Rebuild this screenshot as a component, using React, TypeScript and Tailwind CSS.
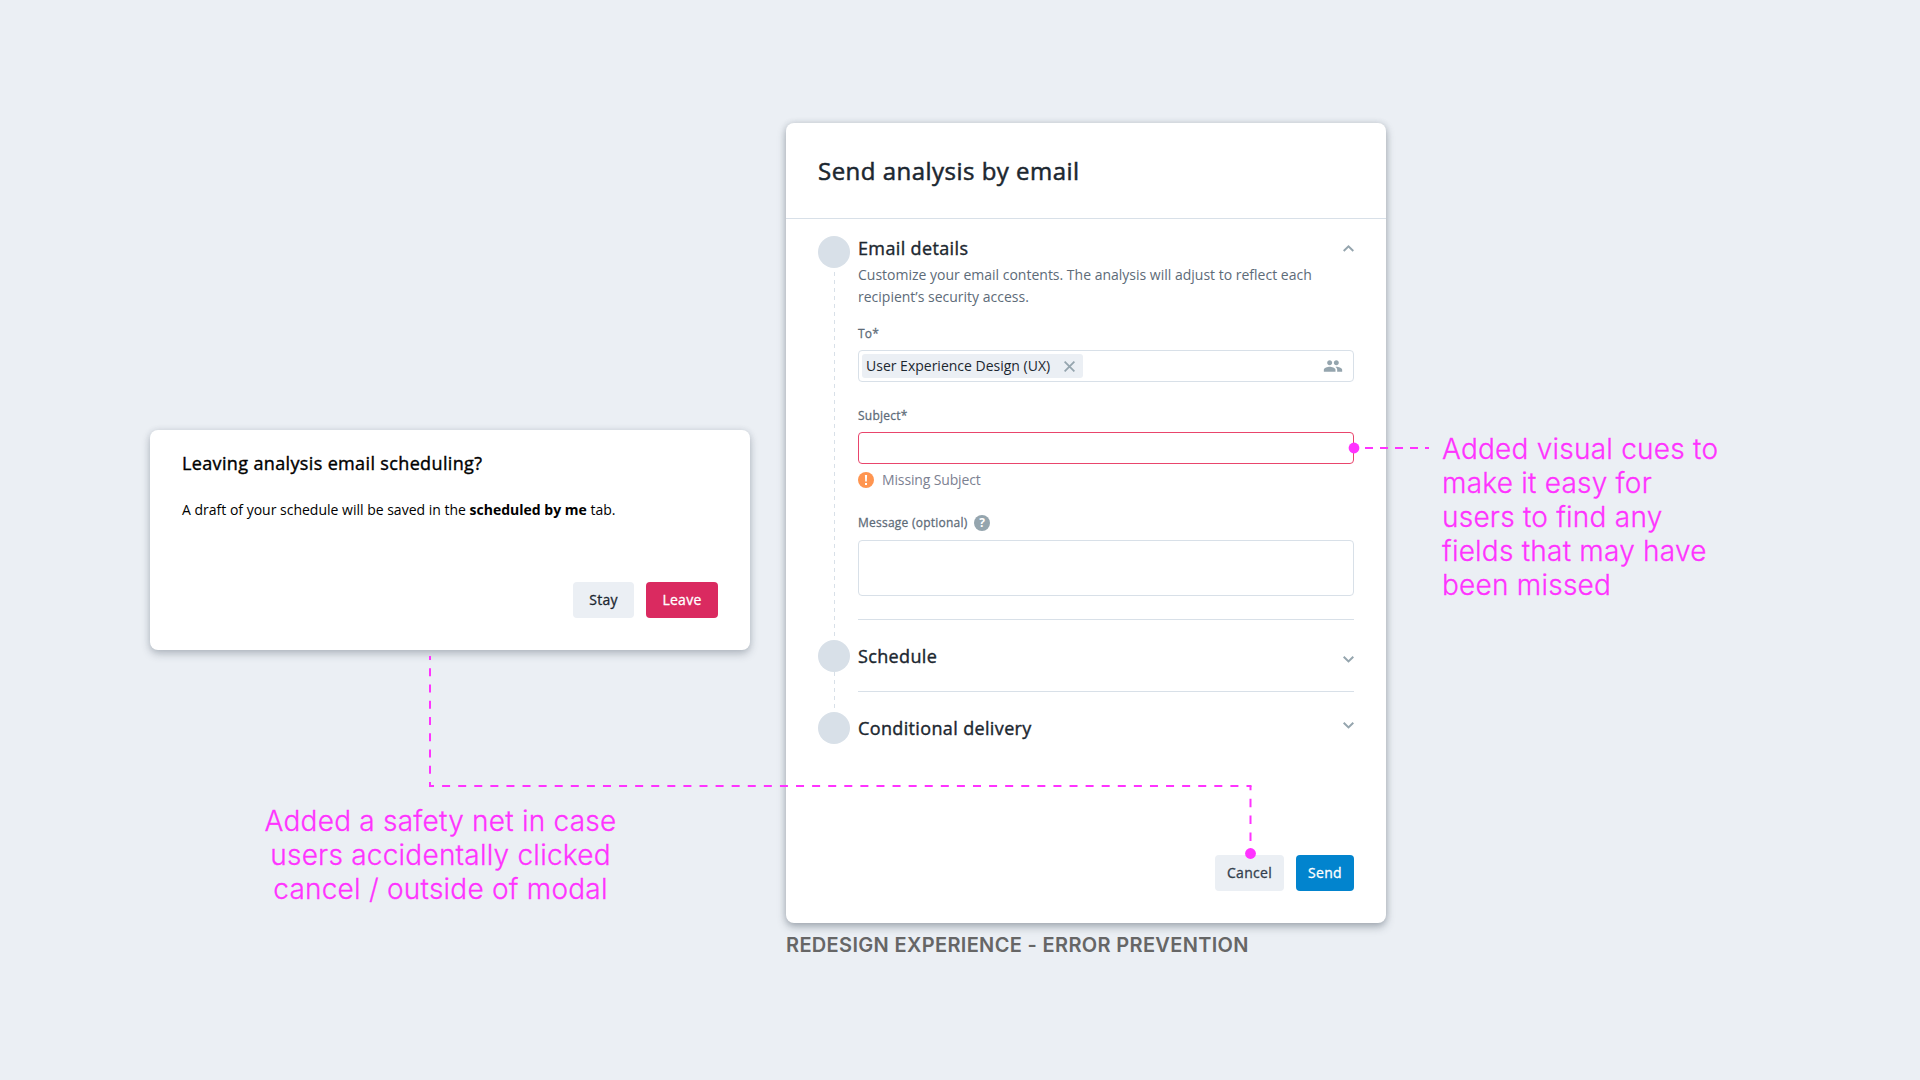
import React from "react";
import { MdPeople } from "react-icons/md";

const PINK = "#ff33ff";

// Medium weight: regular glyphs with a hairline stroke and slightly looser tracking.
const MEDIUM = "font-normal tracking-[0.02em] [-webkit-text-stroke:0.022em_currentColor]";
const NOTE =
  "font-['Inter',sans-serif] text-[28px] leading-[34px] font-light tracking-[0.23px] text-[#ff33ff] [-webkit-text-stroke:0.3px_currentColor]";

function Chevron({ up = false, className = "" }: { up?: boolean; className?: string }) {
  return (
    <svg
      width="11"
      height="7"
      viewBox="0 0 11 7"
      fill="none"
      stroke="#95a5ae"
      strokeWidth="2"
      className={`shrink-0 ${className}`}
    >
      <path d={up ? "M0.7 6 L5.5 1.4 L10.3 6" : "M0.7 0.8 L5.5 5.4 L10.3 0.8"} />
    </svg>
  );
}

type StepProps = { lineLength?: number; dashOffset?: number; children: React.ReactNode };

function Step({ lineLength = 0, dashOffset = 0, children }: StepProps) {
  return (
    <div className="flex">
      <div className="flex w-8 shrink-0 flex-col">
        <div className="size-8 rounded-full bg-[#d8e0e8]" />
        {lineLength > 0 && (
          <svg width="1" height={lineLength} className="ml-4">
            <line x1="0.5" y1="0" x2="0.5" y2={lineLength} stroke="#d8e0e8" strokeDasharray="4 4" strokeDashoffset={dashOffset} />
          </svg>
        )}
      </div>
      <div className="ml-2 flex-1">{children}</div>
    </div>
  );
}

function LeaveDialog() {
  return (
    <div className="flex h-[220px] w-[600px] flex-col rounded-lg bg-white px-8 pt-[21px] pb-8 text-black shadow-[0_4px_8px_rgba(45,60,75,0.28),0_0_6px_rgba(45,60,75,0.1)]">
      <h2 className={`text-[18px] leading-6 ${MEDIUM}`}>Leaving analysis email scheduling?</h2>
      <p className="mt-6 text-[14px] leading-[22px]">
        A draft of your schedule will be saved in the <b className="font-bold">scheduled by me</b> tab.
      </p>
      <div className={`mt-auto flex justify-end gap-3 text-[14px] ${MEDIUM}`}>
        <button className="h-9 w-[61px] rounded bg-[#ebeff4] pb-0.5 text-[#1c2730]">Stay</button>
        <button className="h-9 w-[72px] rounded bg-[#da2a60] pb-0.5 text-white">Leave</button>
      </div>
    </div>
  );
}

function EmailDialog() {
  return (
    <div className="flex h-[800px] w-[600px] flex-col rounded-lg bg-white text-[#1c2730] shadow-[0_4px_8px_rgba(45,60,75,0.35),0_0_6px_rgba(45,60,75,0.15)]">
      <header className="h-24 border-b border-[#d8e0e8] px-8 pt-8">
        <h1 className={`text-[24px] leading-8 ${MEDIUM}`}>Send analysis by email</h1>
      </header>
      <div className="px-8 pt-[17px]">
        <Step lineLength={372} dashOffset={4}>
          <div className="flex items-start justify-between">
            <h2 className={`text-[18px] leading-6 ${MEDIUM}`}>Email details</h2>
            <Chevron up className="mt-[9px]" />
          </div>
          <p className="mt-1 text-[14px] leading-[22px] text-[#5d6b78]">
            Customize your email contents. The analysis will adjust to reflect each
            <br />
            recipient’s security access.
          </p>
          <div className={`mt-[18px] text-[12px] leading-4 text-[#5d6b78] ${MEDIUM}`}>To*</div>
          <div className="mt-2 flex h-8 items-center justify-between rounded border border-[#d8e0e8] pr-[10px] pl-[3px]">
            <div className="flex h-6 w-[221px] items-center rounded-[3px] bg-[#ebeff4] pl-1 text-[14px]">
              <span className="pb-0.5">User Experience Design (UX)</span>
              <svg width="11" height="11" viewBox="0 0 11 11" stroke="#95a5ae" strokeWidth="1.8" className="mr-[8.5px] ml-auto">
                <path d="M0.6 0.6 L10.4 10.4 M10.4 0.6 L0.6 10.4" />
              </svg>
            </div>
            <MdPeople size={20} color="#95a5ae" />
          </div>
          <div className={`mt-[26px] text-[12px] leading-4 text-[#5d6b78] ${MEDIUM}`}>Subject*</div>
          <div className="mt-2 h-8 rounded border border-[#e9456c]" />
          <div className="mt-2 flex h-4 items-center gap-2 text-[14px] leading-4 tracking-[-0.01em] text-[#7c8191]">
            <svg width="16" height="16" viewBox="0 0 16 16">
              <circle cx="8" cy="8" r="8" fill="#ff9550" />
              <path d="M6.9 3 H9.1 L8.8 9.6 H7.2 Z M7 11 H9 V13 H7 Z" fill="#fff" />
            </svg>
            Missing Subject
          </div>
          <div className="mt-[27px] flex h-4 items-center text-[12px] leading-4 text-[#5d6b78]">
            <span className={`w-[116px] whitespace-nowrap ${MEDIUM}`}>Message (optional)</span>
            <span className="flex size-4 items-center justify-center rounded-full bg-[#95a5ae] text-[12px] leading-4 font-bold text-white">
              ?
            </span>
          </div>
          <div className="mt-[9px] h-14 rounded border border-[#d8e0e8]" />
          <div className="mt-[23px] h-px bg-[#d8e0e8]" />
        </Step>
        <Step lineLength={40}>
          <div className="flex items-start justify-between pt-1">
            <h2 className={`text-[18px] leading-6 ${MEDIUM}`}>Schedule</h2>
            <Chevron className="mt-3" />
          </div>
          <div className="mt-[23px] h-px bg-[#d8e0e8]" />
        </Step>
        <Step>
          <div className="flex items-start justify-between pt-1">
            <h2 className={`text-[18px] leading-6 ${MEDIUM}`}>Conditional delivery</h2>
            <Chevron className="mt-1.5" />
          </div>
        </Step>
      </div>
      <footer className={`mt-auto flex justify-end gap-3 px-8 pb-8 text-[14px] ${MEDIUM}`}>
        <button className="h-9 w-[69px] rounded bg-[#ebeff4] pb-0.5 text-[#33404d]">Cancel</button>
        <button className="h-9 w-[58px] rounded bg-[#0284ce] pb-0.5 text-white">Send</button>
      </footer>
    </div>
  );
}

// Dashed connectors that tie the notes to the controls they describe.
function Connectors() {
  return (
    <svg
      width="1920"
      height="1080"
      viewBox="0 0 1920 1080"
      fill="none"
      stroke={PINK}
      strokeWidth="2"
      className="pointer-events-none absolute inset-0"
    >
      <path d="M1354 448 H1429" strokeDasharray="8 7" strokeDashoffset="4" />
      <path d="M430 656 V786" strokeDasharray="8 8.25" strokeDashoffset="4" />
      <path d="M430 786 H1250.5" strokeDasharray="8 8.088" strokeDashoffset="4" />
      <path d="M1250.5 786 V853.5" strokeDasharray="8.5 8.375" strokeDashoffset="4.25" />
      <path d="M429 786 H431 M1249.5 786 H1251.5" />
      <circle cx="1354" cy="448" r="5.4" fill={PINK} stroke="none" />
      <circle cx="1250.5" cy="853.5" r="5.4" fill={PINK} stroke="none" />
    </svg>
  );
}

export default function App() {
  return (
    <main className="relative flex h-[1080px] w-[1920px] overflow-hidden bg-[#ebeff4] font-['Open_Sans',sans-serif]">
      <section className="ml-[150px] w-[600px] pt-[430px]">
        <LeaveDialog />
        <p className={`mt-[154px] -ml-[19px] text-center ${NOTE}`}>
          Added a safety net in case
          <br />
          users accidentally clicked
          <br />
          cancel / outside of modal
        </p>
      </section>
      <section className="ml-9 w-[600px] pt-[123px]">
        <EmailDialog />
        <p className="mt-[10px] font-['Inter',sans-serif] text-[20px] leading-6 font-semibold tracking-[0.34px] whitespace-nowrap text-[#666666]">
          REDESIGN EXPERIENCE - ERROR PREVENTION
        </p>
      </section>
      <section className="ml-14 pt-[432px]">
        <p className={`whitespace-nowrap ${NOTE}`}>
          Added visual cues to
          <br />
          make it easy for
          <br />
          users to find any
          <br />
          fields that may have
          <br />
          been missed
        </p>
      </section>
      <Connectors />
    </main>
  );
}
